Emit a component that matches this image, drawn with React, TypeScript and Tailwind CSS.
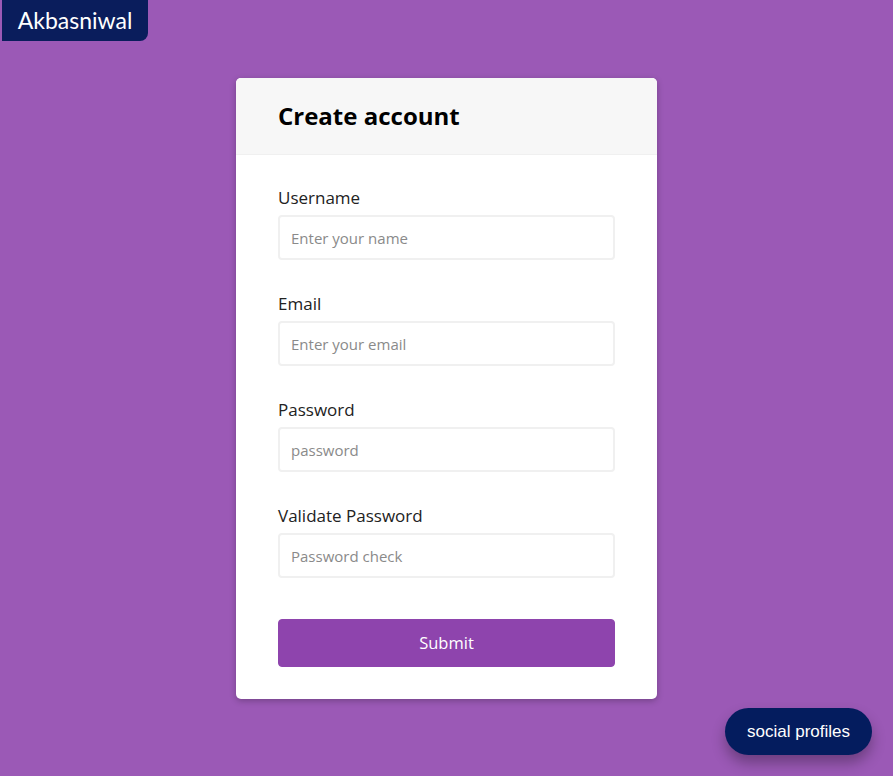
import { useState } from "react";

const fields = [
  { id: "username", label: "Username", type: "text", placeholder: "Enter your name" },
  { id: "email", label: "Email", type: "email", placeholder: "Enter your email" },
  { id: "password", label: "Password", type: "password", placeholder: "password" },
  { id: "password2", label: "Validate Password", type: "password", placeholder: "Password check" },
];

function App() {
  const [values, setValues] = useState<Record<string, string>>({});

  return (
    <div className="min-h-screen bg-[#9b59b6] relative font-['Open_Sans',sans-serif]">
      <div className="absolute top-0 left-[2px] h-[41px] w-[146px] bg-[#0a1d5c] rounded-br-lg flex items-center justify-center text-white text-[23px] font-['Lato',sans-serif]">
        Akbasniwal
      </div>

      <div className="flex justify-center pt-[78px] pb-[77px]">
        <div className="w-[421px] bg-white rounded-[5px] shadow-[0_2px_6px_rgba(0,0,0,0.25)] overflow-hidden">
          <div className="h-[77px] bg-[#f7f7f7] border-b border-[#f0f0f0] flex items-center px-[42px]">
            <h2 className="text-[24px] font-bold text-black">Create account</h2>
          </div>
          <form
            className="px-[42px] pt-[31px] pb-[32px]"
            onSubmit={(e) => e.preventDefault()}
          >
            {fields.map((f) => (
              <div key={f.id} className="mb-[32px]">
                <label htmlFor={f.id} className="block text-[17px] leading-[24px] text-[#222] mb-[5px]">
                  {f.label}
                </label>
                <input
                  id={f.id}
                  type={f.type}
                  placeholder={f.placeholder}
                  value={values[f.id] || ""}
                  onChange={(e) => setValues({ ...values, [f.id]: e.target.value })}
                  className="block w-full h-[45px] border-2 border-[#f0f0f0] rounded-[4px] px-[11px] text-[15px] text-[#333] placeholder:text-[#8a8a8a] outline-none"
                />
              </div>
            ))}
            <button
              type="submit"
              className="mt-[9px] w-full h-[48px] bg-[#8e44ad] border border-[#8e44ad] rounded-[4px] text-white text-[16.5px]"
            >
              Submit
            </button>
          </form>
        </div>
      </div>

      <button className="absolute left-[725px] top-[708px] w-[147px] h-[47px] rounded-full bg-[#041c5e] text-white text-[17px] font-['Liberation_Sans',sans-serif] shadow-[0_8px_14px_rgba(0,0,0,0.3)]">
        social profiles
      </button>
    </div>
  );
}

export default App;
